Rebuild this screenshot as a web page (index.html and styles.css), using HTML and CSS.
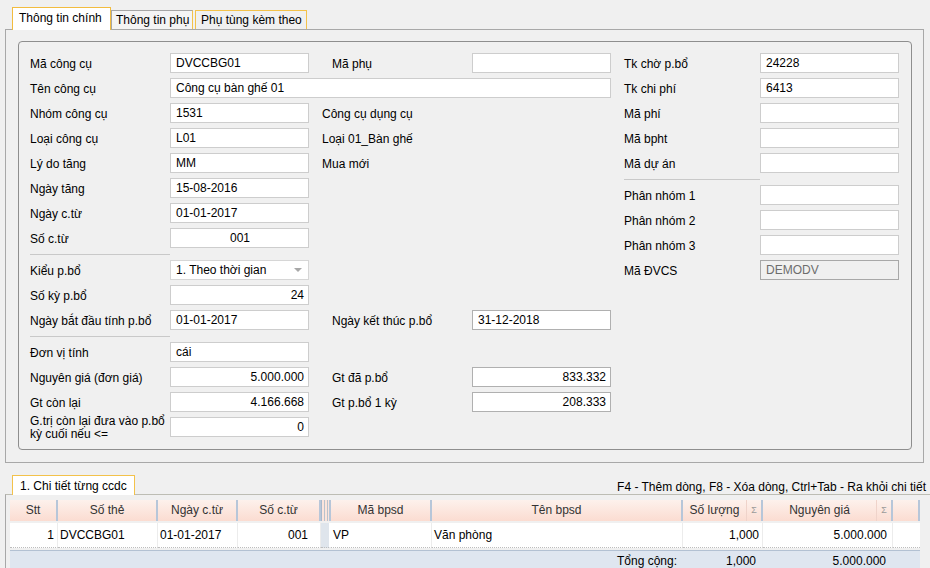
FILE: index.html
```html
<!DOCTYPE html>
<html lang="vi">
<head>
<meta charset="utf-8">
<title>Công cụ dụng cụ</title>
<link rel="stylesheet" href="styles.css">
</head>
<body>
<div class="main">
  <div class="tabstrip">
    <div class="tab tab-active">Thông tin chính</div>
    <div class="tab tab-2">Thông tin phụ</div>
    <div class="tab tab-3">Phụ tùng kèm theo</div>
  </div>
  <div class="panel">
    <div class="group">
      <div class="left">
        <div class="lab">Mã công cụ</div>
        <div class="inp">DVCCBG01</div>
        <div class="lab2">Mã phụ</div>
        <div class="inp"></div>

        <div class="lab">Tên công cụ</div>
        <div class="inp wide">Công cụ bàn ghế 01</div>

        <div class="lab">Nhóm công cụ</div>
        <div class="inp">1531</div>
        <div class="info">Công cụ dụng cụ</div>

        <div class="lab">Loại công cụ</div>
        <div class="inp">L01</div>
        <div class="info">Loại 01_Bàn ghế</div>

        <div class="lab">Lý do tăng</div>
        <div class="inp">MM</div>
        <div class="info">Mua mới</div>

        <div class="lab">Ngày tăng</div>
        <div class="inp">15-08-2016</div>

        <div class="lab">Ngày c.từ</div>
        <div class="inp">01-01-2017</div>

        <div class="lab">Số c.từ</div>
        <div class="inp center">001</div>

        <div class="sep"></div>

        <div class="lab">Kiểu p.bổ</div>
        <div class="inp combo">1. Theo thời gian<span class="arrow"></span></div>

        <div class="lab">Số kỳ p.bổ</div>
        <div class="inp num">24</div>

        <div class="lab">Ngày bắt đầu tính p.bổ</div>
        <div class="inp">01-01-2017</div>
        <div class="lab2">Ngày kết thúc p.bổ</div>
        <div class="inp dark">31-12-2018</div>

        <div class="sep"></div>

        <div class="lab">Đơn vị tính</div>
        <div class="inp">cái</div>

        <div class="lab">Nguyên giá (đơn giá)</div>
        <div class="inp num">5.000.000</div>
        <div class="lab2">Gt đã p.bổ</div>
        <div class="inp num dark">833.332</div>

        <div class="lab">Gt còn lại</div>
        <div class="inp num">4.166.668</div>
        <div class="lab2">Gt p.bổ 1 kỳ</div>
        <div class="inp num dark">208.333</div>

        <div class="lab two">G.trị còn lại đưa vào p.bổ kỳ cuối nếu &lt;=</div>
        <div class="inp num">0</div>
      </div>

      <div class="right">
        <div class="rrow"><div class="rlab">Tk chờ p.bổ</div><div class="inp">24228</div></div>
        <div class="rrow"><div class="rlab">Tk chi phí</div><div class="inp">6413</div></div>
        <div class="rrow"><div class="rlab">Mã phí</div><div class="inp"></div></div>
        <div class="rrow"><div class="rlab">Mã bpht</div><div class="inp"></div></div>
        <div class="rrow"><div class="rlab">Mã dự án</div><div class="inp"></div></div>
        <div class="rsep"></div>
        <div class="rrow"><div class="rlab">Phân nhóm 1</div><div class="inp"></div></div>
        <div class="rrow"><div class="rlab">Phân nhóm 2</div><div class="inp"></div></div>
        <div class="rrow"><div class="rlab">Phân nhóm 3</div><div class="inp"></div></div>
        <div class="rrow"><div class="rlab">Mã ĐVCS</div><div class="inp disabled">DEMODV</div></div>
      </div>
    </div>
  </div>
</div>

<div class="detail">
  <div class="dstrip">
    <div class="dtab">1. Chi tiết từng ccdc</div>
    <div class="hint">F4 - Thêm dòng, F8 - Xóa dòng, Ctrl+Tab - Ra khỏi chi tiết</div>
  </div>
  <div class="dpanel">
    <div class="grid">
      <div class="hc">Stt</div>
      <div class="hc">Số thẻ</div>
      <div class="hc">Ngày c.từ</div>
      <div class="hc">Số c.từ</div>
      <div class="hc hidden-col"></div>
      <div class="hc">Mã bpsd</div>
      <div class="hc">Tên bpsd</div>
      <div class="hc sum"><span class="ht">Số lượng</span><span class="sig">Σ</span></div>
      <div class="hc sum"><span class="ht">Nguyên giá</span><span class="sig">Σ</span></div>
      <div class="hc"></div>

      <div class="dc r">1</div>
      <div class="dc">DVCCBG01</div>
      <div class="dc">01-01-2017</div>
      <div class="dc r pad12">001</div>
      <div class="dc hidden-cell"></div>
      <div class="dc">VP</div>
      <div class="dc">Văn phòng</div>
      <div class="dc r">1,000</div>
      <div class="dc r pad5">5.000.000</div>
      <div class="dc"></div>

      <div class="fc span7">Tổng cộng:</div>
      <div class="fc r">1,000</div>
      <div class="fc r">5.000.000</div>
      <div class="fc"></div>
    </div>
  </div>
</div>
</body>
</html>
```

FILE: styles.css
```css
* { box-sizing: border-box; }

body {
  margin: 0;
  width: 930px;
  height: 568px;
  overflow: hidden;
  background: #f0f0f0;
  font: 12px "Liberation Sans", Arial, sans-serif;
  color: #000;
}

/* ---------- top tabs ---------- */
.main { margin-left: 5px; width: 919px; }

.tabstrip {
  display: flex;
  align-items: flex-end;
  height: 29px;
  padding-left: 7px;
}

.tab {
  height: 19px;
  border: 1px solid #f3c24b;
  border-bottom: none;
  padding-left: 4px;
  line-height: 19px;
  white-space: nowrap;
  background: #f0f0f0;
}

.tab-active {
  position: relative;
  z-index: 1;
  width: 99px;
  height: 23px;
  margin-bottom: -1px;
  padding-left: 6px;
  line-height: 20px;
  background: #fff;
  border-color: #f2bc3f;
}

.tab-2 {
  width: 82px;
  border-color: #a6a6a6;
  border-right-color: #f3c24b;
  background: #f4f4f4;
}

.tab-3 {
  width: 112px;
  margin-left: 2px;
  padding-left: 5px;
}

.panel {
  height: 434px;
  border: 1px solid #a8a8a8;
  padding: 11px 11px 0 12px;
}

.group {
  height: 409px;
  border: 1px solid #8e8e8e;
  border-radius: 4px;
  padding: 11px 12px 0 11px;
  display: flex;
  gap: 13px;
}

/* ---------- left form grid ---------- */
.left {
  display: grid;
  grid-template-columns: 140px 139px 13px 150px 139px;
  grid-template-rows: repeat(8, 20px) 2px repeat(3, 20px) 2px repeat(4, 20px);
  row-gap: 5px;
  align-content: start;
}

.lab {
  grid-column: 1;
  align-self: center;
  white-space: nowrap;
  padding-top: 1px;
}

.lab.two {
  white-space: normal;
  line-height: 13px;
  padding-right: 2px;
}

.lab2 {
  grid-column: 4;
  align-self: center;
  padding: 1px 0 0 10px;
  white-space: nowrap;
}

.info {
  grid-column: 4 / span 2;
  align-self: center;
  white-space: nowrap;
  padding-top: 1px;
}

.sep {
  grid-column: 1;
  border-bottom: 1px solid #c9c9c9;
}

.inp {
  height: 20px;
  background: #fff;
  border: 1px solid #cdcdcd;
  padding: 0 4px 0 5px;
  line-height: 19px;
  white-space: nowrap;
  overflow: hidden;
}

.inp.wide { grid-column: 2 / span 4; }
.inp.num { text-align: right; }
.inp.center { text-align: center; }
.inp.dark { border-color: #b0b0b0; }

.inp.combo {
  display: flex;
  justify-content: space-between;
  align-items: center;
  border-color: #d6d6d6;
}

.arrow {
  width: 0;
  height: 0;
  margin-right: 2px;
  border-left: 4px solid transparent;
  border-right: 4px solid transparent;
  border-top: 4px solid #a8a8a8;
}

.inp.disabled {
  background: #f0f0f0;
  border-color: #a8a8a8;
  color: #6d6d6d;
}

/* ---------- right column ---------- */
.right {
  width: 275px;
  display: flex;
  flex-direction: column;
  gap: 5px;
}

.rrow {
  display: flex;
  align-items: center;
  height: 20px;
}

.rlab { width: 136px; white-space: nowrap; padding-top: 1px; }
.rrow .inp { width: 139px; }

.rsep {
  width: 136px;
  height: 2px;
  border-bottom: 1px solid #c9c9c9;
}

/* ---------- detail ---------- */
.detail { margin: 12px 0 0 5px; }

.dstrip {
  display: flex;
  align-items: flex-end;
  justify-content: space-between;
  height: 19px;
  padding: 0 4px 0 7px;
}

.dtab {
  position: relative;
  z-index: 1;
  width: 123px;
  height: 20px;
  margin-bottom: -1px;
  border: 1px solid #f3c24b;
  border-bottom: none;
  background: #fff;
  padding-left: 7px;
  line-height: 20px;
  white-space: nowrap;
}

.hint {
  align-self: center;
  padding-top: 5px;
  white-space: nowrap;
}

.dpanel {
  height: 80px;
  border-top: 1px solid #bdbdb4;
  border-left: 1px solid #a8a8a8;
  padding: 5px 0 0 4px;
}

.grid {
  display: grid;
  width: 910px;
  grid-template-columns: 48px 100px 80px 83px 10px 101px 251px 80px 130px 27px;
  grid-template-rows: 21px 25px 22px;
  row-gap: 2px;
}

.hc {
  background: linear-gradient(#fdf1ec, #fbdcd1);
  border-right: 2px solid #b7c6d9;
  color: #333;
  text-align: center;
  line-height: 21px;
  white-space: nowrap;
}

.hc:last-child { border-right: none; }

.hc.hidden-col {
  border-left: 1px solid #a9b8cc;
  background: linear-gradient(90deg, #fbe4dc 0 2px, #b9c2cc 2px 3px, #fbe4dc 3px 5px, #b9c2cc 5px 6px, #fbe4dc 6px);
}

.hc.sum { display: flex; }
.hc.sum .ht { flex: 1; }
.hc.sum .sig {
  width: 15px;
  border-left: 1px solid #efd3ca;
  color: #9a9a9a;
  font-size: 9px;
}

.dc {
  background: #fff;
  border-right: 1px solid #ececec;
  border-bottom: 1px dotted #bdbdbd;
  line-height: 24px;
  padding: 0 5px 0 2px;
  white-space: nowrap;
  overflow: hidden;
}

.dc.r { text-align: right; padding: 0 3px 0 2px; }
.dc.pad12 { padding-right: 12px; }
.dc.pad5 { padding-right: 5px; }

.dc.hidden-cell {
  background: #dfe5ec;
  border-right: 2px solid #fff;
}

.dc:nth-child(20) { border-right: none; }

.fc {
  background: #dfe6f0;
  border-top: 1px solid #b3c1d3;
  line-height: 21px;
  white-space: nowrap;
}

.fc.span7 {
  grid-column: 1 / span 7;
  text-align: right;
  padding-right: 6px;
}

.fc.r { text-align: right; padding-right: 7px; }
```
